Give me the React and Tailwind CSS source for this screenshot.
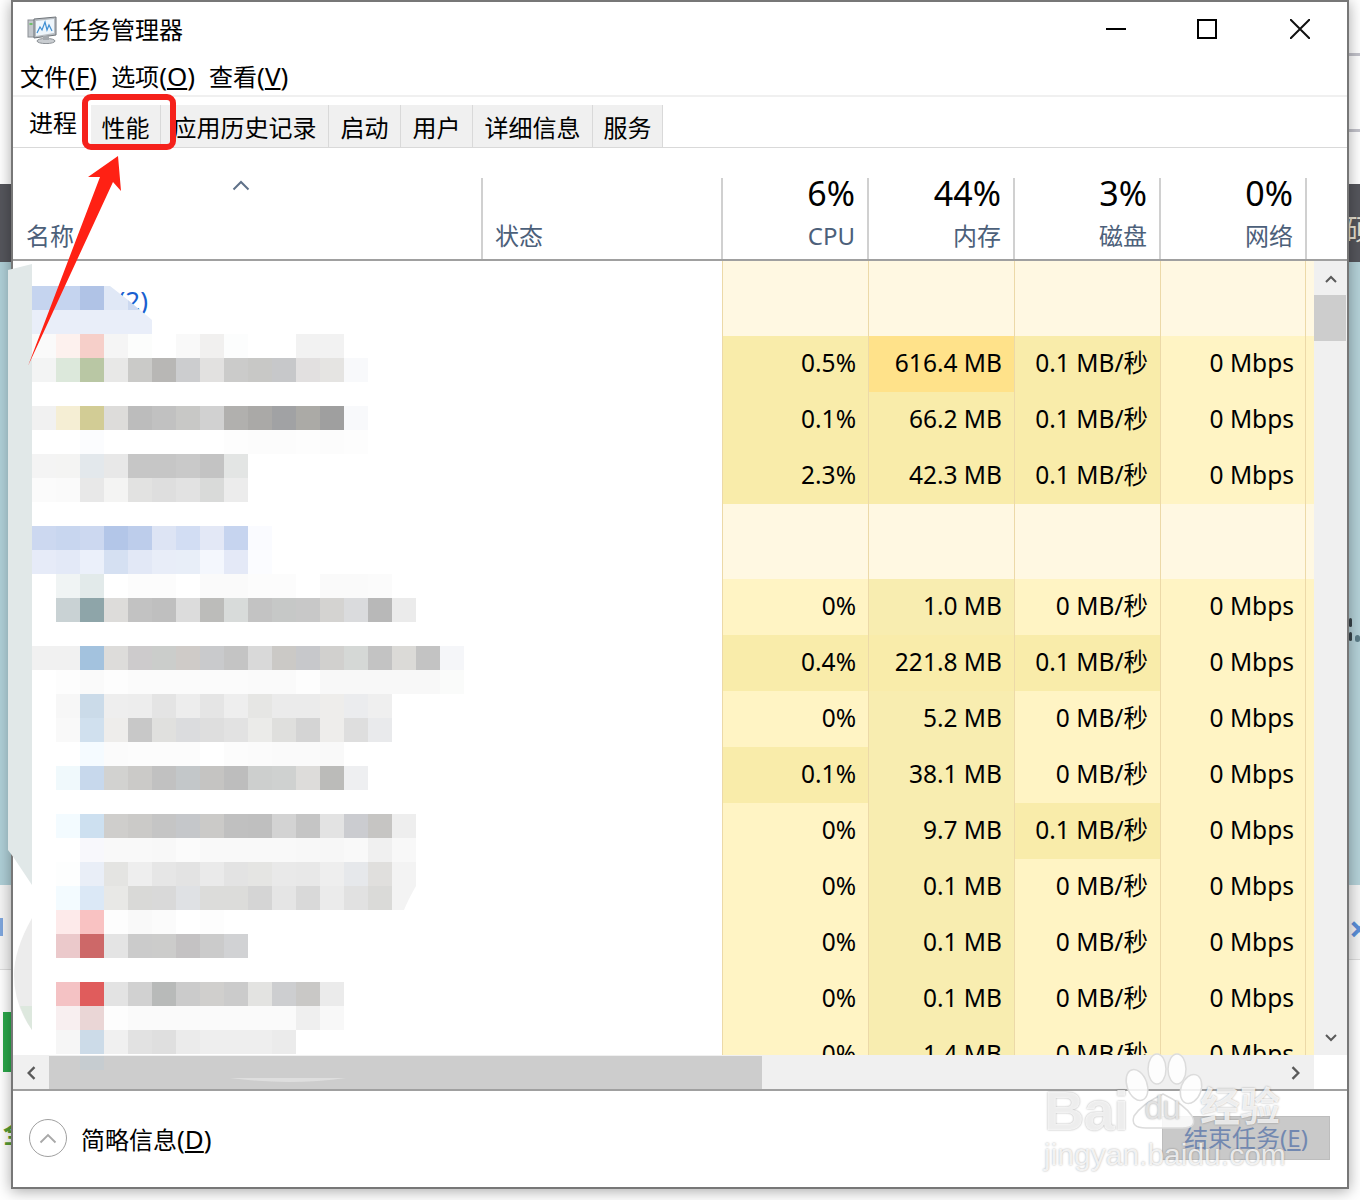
import React from 'react';

const GRID = 'grid grid-cols-[469px_240px_146px_146px_146px_146px_8px]';

const tabs = [
    { label: '性能', width: 'w-[70px]' },
    { label: '应用历史记录', width: 'w-[168px]' },
    { label: '启动', width: 'w-[72px]' },
    { label: '用户', width: 'w-[72px]' },
    { label: '详细信息', width: 'w-[120px]' },
    { label: '服务', width: 'w-[70px]' },
];

const columns = [
    { value: '6%', label: 'CPU' },
    { value: '44%', label: '内存' },
    { value: '3%', label: '磁盘' },
    { value: '0%', label: '网络' },
];

const shade = {
    l: 'bg-[#fff4c4]',
    c: 'bg-[#f8edb0]',
    m: 'bg-[#f9ecaa]',
    s: 'bg-[#ffe28a]',
    g: 'bg-[#fff8e2]',
};

// every cell: [text, shade]
const rows = [
    { group: true, text: '(2)' },
    { cells: [['0.5%', 'm'], ['616.4 MB', 's'], ['0.1 MB/秒', 'm'], ['0 Mbps', 'l']] },
    { cells: [['0.1%', 'm'], ['66.2 MB', 'm'], ['0.1 MB/秒', 'm'], ['0 Mbps', 'l']] },
    { cells: [['2.3%', 'm'], ['42.3 MB', 'm'], ['0.1 MB/秒', 'm'], ['0 Mbps', 'l']] },
    { group: true },
    { cells: [['0%', 'l'], ['1.0 MB', 'c'], ['0 MB/秒', 'l'], ['0 Mbps', 'l']] },
    { cells: [['0.4%', 'm'], ['221.8 MB', 'm'], ['0.1 MB/秒', 'm'], ['0 Mbps', 'l']] },
    { cells: [['0%', 'l'], ['5.2 MB', 'c'], ['0 MB/秒', 'l'], ['0 Mbps', 'l']] },
    { cells: [['0.1%', 'm'], ['38.1 MB', 'c'], ['0 MB/秒', 'l'], ['0 Mbps', 'l']] },
    { cells: [['0%', 'l'], ['9.7 MB', 'c'], ['0.1 MB/秒', 'm'], ['0 Mbps', 'l']] },
    { cells: [['0%', 'l'], ['0.1 MB', 'c'], ['0 MB/秒', 'l'], ['0 Mbps', 'l']] },
    { cells: [['0%', 'l'], ['0.1 MB', 'c'], ['0 MB/秒', 'l'], ['0 Mbps', 'l']] },
    { cells: [['0%', 'l'], ['0.1 MB', 'c'], ['0 MB/秒', 'l'], ['0 Mbps', 'l']] },
    { cells: [['0%', 'l'], ['1.4 MB', 'c'], ['0 MB/秒', 'l'], ['0 Mbps', 'l']] },
];

// pixelated process names: [y, first column, colours]
const mosaic = [
    [286, 0, 'c5d4ef c5d4ef b0c3e6'],
    [334, 0, 'fafafa fdf1ee f6cfc9 f5f5f5 fcfdfc fff f9f9f9 f1f0ef fcfdfd fff fff f2f2f2 f2f2f2'],
    [358, 0, 'f3f4f4 dce8db b9c7a4 e8e8e7 cacac8 b8b7b5 cccdcf e2e1e0 cbcbca c8c8c6 c7c8ca e2e0e0 e5e4e2 f8f9fb'],
    [406, 0, 'f1f1f1 f5eed4 d2cc95 dddcda bcbcbc c1c1c1 c8c8c6 d1d1d1 b1b0ae aaa9a7 a1a2a4 abaaa6 9f9f9f f8f9fb'],
    [430, 0, 'fff fff fbfcfe fff fff fff fff fff fdfdfd fcfcfc fcfcfc fdfdfd fcfcfc fdfdfd'],
    [454, 0, 'f4f4f4 f4f4f3 e3e8ec e8e8e8 c6c6c6 c6c6c6 c9c9c9 c3c3c3 e3e5e4'],
    [478, 0, 'fbfbfb fafafa e8e8e8 f4f4f3 e2e2e1 dedede e2e2e2 d9dad9 ececec'],
    [526, 0, 'ccd8f0 c8d6ef ccd8f0 b3c6e8 bdcdeb dde4f4 d2ddf3 e3e8f6 c6d4ef fafbff'],
    [550, 0, 'e6ebf8 e3e9f7 ebf0fa d5e0f2 e2e8f6 e8edf8 e8eef8 f4f7fd e4e9f7 fbfcff'],
    [574, 1, 'f0f4f4 e2eaea fff fcfcfc fcfcfc fff fafafa fafafa fcfcfc fcfcfc fff fafafa fafafa fbfbfb'],
    [598, 1, 'c9d2d4 8ea5a9 dddcda c2c2c2 bfbfbf dcdcdc bcbcba d8dbda c3c3c3 c6c8c7 c8c8c8 d4d3d1 dadbdd b8b8b8 ebebeb'],
    [646, 0, 'f1f1f1 f1f1f1 a3c2de dddcda cdcbcc cbcdcb cfcbc8 c9cacc c4c4c4 d9d9d9 cbc9c6 c7c8cb d1d0ce d5d8d6 c3c3c3 dbdad7 c3c3c3 f5f6f9'],
    [670, 1, 'fdfdfd fafafa fdfdfd fbfbfb fbfbfb fbfbfb fbfbfb fbfbfb fafafa fafafa fdfdfd f8f8f8 f8f8f8 f8f8f8 f8f8f8 f8f8f8 fafbfa'],
    [694, 1, 'f7f7f7 cbdbe9 eeeeee ededed e4e4e4 ededed e5e5e5 eeeeee e6e6e4 ebebeb ebebeb eeedeb ebecee efefef'],
    [718, 1, 'f9f9f9 d0e0ee eeedeb c8c8c8 e0e0de dbdcde dedede e2e2e2 ebebe9 dfdfdd d4d4d4 eeedeb dedede e9eaec'],
    [742, 2, 'f5fbff fbfbfb fcfcfc fcfcfc fcfcfc fff fcfcfc fbfbfb fafafa fafafa f9f9f9'],
    [766, 1, 'f0f9fc c7d8ec d2d2d0 cbcac8 c1c1c1 c3c7c9 c5c4c2 bdbdbd cdcfce cfd1d0 dddcda bbbbb9 eeeff1'],
    [814, 1, 'f3fbff cde0f0 cfcecc cbcac8 c5c5c5 c5c7ca cbcac8 c0c0c0 bfbfbf d3d3d3 c5c5c5 e3e3e3 cbccd0 c6c5c3 eeeeee'],
    [838, 2, 'f8f8fc f9f9f9 f9f9f9 f8f8f8 fbfbfb f9f9f9 f9f9f9 f9f9f9 f9f9f9 f8f8f8 f7f7f7 f9f9f9 f0f0f0 f8f8f8'],
    [862, 1, 'fdfefe e9eef7 e4e4e2 eeeeee e6e6e6 e3e3e3 eaeaea e3e3e3 e5e5e3 e9e9e9 e8e8e8 eeeeee e6e8eb e0dfdd f3f3f3'],
    [886, 1, 'f3fbff dbe8f6 e8e8e6 d9d9d7 d9d9d9 dfe1e4 dcdcda dcdcda d5d5d5 e5e5e5 d9d9d9 ebebeb e1e1e1 dadad8'],
    [910, 1, 'fdeaea f9c2c2 fdfdfd f9f9f9 fbfbfb fff fdfdfd'],
    [934, 1, 'ebc9cb cd6868 e4e4e4 cbcbcb cccccb c4c2c3 cbcbcb d1d2d4'],
    [982, 1, 'f4c2c4 e05c5c e3e3e3 d1d1d1 b8bab9 cbcbcb d0cfcd cbcbcb e3e3e1 cdced0 c9c8c6 ebebeb'],
    [1006, 1, 'f8eff0 ead6d6 fdfdfd fafafa fafafa fafafa fafafa fafafa fafafa fafafa efefef f8f8f8'],
    [1030, 1, 'f6f6f6 ccdbe8 f0f0f0 e2e2e2 dfdfdf ebebeb eeeeee eeeeee eeeeee ebebeb'],
];

const Chevron = ({ up, className, weight = 2 }) => (
    <svg viewBox="0 0 12 8" className={className}>
        <path d={up ? 'M1 7L6 2l5 5' : 'M1 1l5 5 5-5'} fill="none" stroke="currentColor" strokeWidth={weight} />
    </svg>
);

const SideChevron = ({ right }) => (
    <svg viewBox="0 0 8 12" className="w-[10px] h-[14px] text-[#5a5a5a]">
        <path d={right ? 'M1 1l5 5-5 5' : 'M7 1L2 6l5 5'} fill="none" stroke="currentColor" strokeWidth="2" />
    </svg>
);

const TaskIcon = () => (
    <svg viewBox="0 0 30 28" className="w-[30px] h-[28px] mr-[6px]">
        <rect x="1" y="4" width="9" height="17" fill="#c3c7cb" stroke="#8b9095" />
        <rect x="2.5" y="7" width="3" height="2" fill="#6fbf6a" />
        <path d="M7 3l22-2v18L7 22z" fill="#b9bec3" stroke="#6f757a" />
        <path d="M9 5l18-2v14L9 20z" fill="#eef6fc" />
        <path d="M10 17l3-6 2 3 3-8 2 8 2-5 3 6" fill="none" stroke="#3f8fd2" strokeWidth="1.2" />
        <ellipse cx="19" cy="25" rx="9" ry="2.6" fill="#c9cdd1" stroke="#8b9095" />
        <rect x="16" y="20" width="6" height="4" fill="#a4a9ae" />
    </svg>
);

const Backdrop = () => (
    <>
        <div className="absolute left-0 top-[184px] w-[12px] h-[78px] bg-[#55565c]" />
        <div className="absolute left-0 top-[262px] w-[12px] h-[623px] bg-[#afcfd7]" />
        <div className="absolute left-0 top-[885px] w-[12px] h-[85px] bg-[#f5f5f5] border-b border-[#dddddd]" />
        <div className="absolute left-0 top-[918px] w-[3px] h-[18px] bg-[#7ea6dd]" />
        <div className="absolute left-[3px] top-[1012px] w-[9px] h-[60px] bg-[#2ba84a]" />
        <div className="absolute left-[3px] top-[1116px] text-[26px] leading-[34px] font-bold text-[#5a9e32]">全</div>
        <div className="absolute left-[1349px] top-[53px] w-[11px] h-[3px] bg-[#c3c3cb]" />
        <div className="absolute left-[1349px] top-[129px] w-[11px] h-[3px] bg-[#c3c3cb]" />
        <div className="absolute left-[1349px] top-[184px] w-[11px] h-[78px] bg-[#55565c]" />
        <div className="absolute left-[1345px] top-[212px] text-[28px] leading-[34px] text-[#e6e0d0]">硕</div>
        <div className="absolute left-[1349px] top-[262px] w-[11px] h-[623px] bg-[#b5d2d9]" />
        <div className="absolute left-[1349px] top-[618px] w-[3px] h-[9px] rounded-full bg-[#39444a]" />
        <div className="absolute left-[1349px] top-[632px] w-[3px] h-[9px] rounded-full bg-[#39444a]" />
        <div className="absolute left-[1355px] top-[635px] w-[5px] h-[7px] rounded-full bg-[#5c7d88]" />
        <div className="absolute left-[1349px] top-[885px] w-[11px] h-[75px] bg-[#f4f4f4] border-b border-[#dddddd]" />
        <div className="absolute left-[1349px] top-[909px] text-[36px] leading-[40px] font-bold text-[#5b8fd8]">×</div>
    </>
);

const Overlay = () => (
    <svg viewBox="0 0 1360 1200" className="absolute left-0 top-0 w-[1360px] h-[1200px] pointer-events-none">
        <path d="M8 270L32 264V885L14 858L8 850Z" fill="#e1e8e8" />
        <path d="M32 918Q14 950 14 975Q14 1005 32 1030Z" fill="#ececec" />
        <path d="M20 1006H32V1030Q25 1020 20 1006Z" fill="#dde8de" />
        {mosaic.flatMap(([y, start, colours]) =>
            colours.split(' ').map((colour, i) => (
                <rect key={`${y}-${i}`} x={32 + (start + i) * 24} y={y} width="24" height="24" fill={`#${colour}`} />
            ))
        )}
        <path d="M104 286H110L128 300V310H104Z" fill="#e0e8f6" />
        <path d="M128 300L140 310H128Z" fill="#ccd9f0" />
        <path d="M32 310H140L152 320V334H32Z" fill="#e9eef9" />
        <path d="M392 886H416Q408 900 404 910H392Z" fill="#f3f3f3" />
        <rect x="80" y="1056" width="24" height="14" fill="#c3ccd2" opacity="0.7" />
        <path d="M230 1078Q290 1086 346 1078Z" fill="#dedede" />
        <path d="M118 156L121 191L113 182L28 366L100 177L88 177Z" fill="#ff2114" />
        <rect x="85" y="97" width="88" height="50" rx="6" fill="none" stroke="#f5211b" strokeWidth="6" />
        <g fill="#ffffff" fillOpacity="0.85" stroke="#dcdcdc" strokeWidth="1.5">
            <ellipse cx="1137" cy="1085" rx="10" ry="16" transform="rotate(-20 1137 1085)" />
            <ellipse cx="1157" cy="1069" rx="9" ry="15" />
            <ellipse cx="1177" cy="1069" rx="9" ry="15" />
            <ellipse cx="1191" cy="1089" rx="10" ry="15" transform="rotate(20 1191 1089)" />
            <path d="M1163 1094Q1142 1104 1134 1116Q1130 1128 1146 1128H1182Q1198 1128 1192 1116Q1184 1104 1163 1094Z" />
        </g>
    </svg>
);

const Watermark = () => (
    <div className="absolute left-[1044px] top-[1082px] w-[250px] pointer-events-none text-white/80 [text-shadow:0_0_2px_rgba(0,0,0,0.35)] font-['Liberation_Sans','Noto_Sans_CJK_SC',sans-serif]">
        <div className="flex items-center h-[58px] text-[56px] leading-[58px] font-bold">
            <span className="tracking-[-1px]">Bai</span>
            <span className="ml-[16px] -mt-[8px] text-[34px] font-normal tracking-[-1px] text-[#e2e2e2]">du</span>
            <span className="ml-[20px] -mt-[8px] text-[40px]">经验</span>
        </div>
        <div className="text-[30px] leading-[30px] whitespace-nowrap">jingyan.baidu.com</div>
    </div>
);

export default function App() {
    return (
        <div className="relative w-[1360px] h-[1200px] overflow-hidden bg-white text-black font-['Noto_Sans','Noto_Sans_CJK_SC',sans-serif]">
            <Backdrop />

            <div className="absolute left-[11px] top-0 w-[1338px] h-[1189px] flex flex-col bg-white border-2 border-[#777777] shadow-[0_2px_14px_rgba(0,0,0,0.35)]">
                {/* title bar */}
                <div className="flex items-center h-[56px] shrink-0 pl-[14px] pr-[1px]">
                    <TaskIcon />
                    <span className="text-[24px] leading-[34px]">任务管理器</span>
                    <div className="ml-auto flex -mt-[2px]">
                        <button className="w-[88px] h-[56px] flex items-center justify-center">
                            <span className="block w-[20px] h-[2px] bg-black" />
                        </button>
                        <button className="w-[94px] h-[56px] flex items-center justify-center">
                            <span className="block w-[20px] h-[20px] border-2 border-black" />
                        </button>
                        <button className="w-[92px] h-[56px] flex items-center justify-center">
                            <svg viewBox="0 0 20 20" className="w-[20px] h-[20px]">
                                <path d="M0 0L20 20M20 0L0 20" stroke="#111" strokeWidth="2" />
                            </svg>
                        </button>
                    </div>
                </div>

                {/* menu */}
                <div className="flex items-center gap-[14px] h-[39px] shrink-0 pl-[7px] border-b-2 border-[#f0f0f0] text-[24px] leading-[34px]">
                    <span>文件<span className="text-[26px]">(<span className="underline">F</span>)</span></span>
                    <span>选项<span className="text-[26px]">(<span className="underline">O</span>)</span></span>
                    <span>查看<span className="text-[26px]">(<span className="underline">V</span>)</span></span>
                </div>

                {/* tabs */}
                <div className="flex items-end h-[51px] shrink-0 border-b border-[#d9d9d9] text-[24px] leading-[34px]">
                    <div className="w-[78px] h-full flex items-center pl-[16px] pt-[2px]">进程</div>
                    {tabs.map((tab) => (
                        <div
                            key={tab.label}
                            className={`${tab.width} h-[42px] flex items-center justify-center pt-[4px] bg-[#f0f0f0] border-r border-[#d9d9d9]`}
                        >
                            {tab.label}
                        </div>
                    ))}
                </div>

                {/* column header */}
                <div className={`${GRID} h-[113px] shrink-0 border-b-2 border-[#a0a0a0]`}>
                    <div className="flex flex-col mt-[30px] pl-[13px]">
                        <Chevron up weight={1.3} className="w-[18px] h-[12px] ml-[206px] mt-[1px] text-[#5f7189]" />
                        <span className="mt-auto pb-[6px] text-[24px] leading-[34px] text-[#4c607a]">名称</span>
                    </div>
                    <div className="flex flex-col justify-end mt-[30px] -ml-[1px] pl-[12px] pb-[6px] border-l-2 border-[#d0d0d0] text-[24px] leading-[34px] text-[#4c607a]">
                        状态
                    </div>
                    {columns.map((col) => (
                        <div key={col.label} className="flex flex-col items-end mt-[30px] -ml-[1px] pr-[13px] border-l-2 border-[#d0d0d0]">
                            <span className="text-[34px] leading-[30px]">{col.value}</span>
                            <span className="mt-auto pb-[6px] text-[24px] leading-[34px] text-[#4c607a]">{col.label}</span>
                        </div>
                    ))}
                    <div className="mt-[30px] -ml-[1px] border-l-2 border-[#d0d0d0]" />
                </div>

                {/* process list + vertical scrollbar */}
                <div className="flex h-[794px] shrink-0">
                    <div className="w-[1301px] overflow-hidden">
                        {rows.map((row, index) =>
                            row.group ? (
                                <div key={index} className={`${GRID} h-[75px]`}>
                                    <div className="col-span-2">
                                        {row.text && (
                                            <div className="w-[135px] pt-[22px] text-right text-[26px] leading-[34px] text-[#1a5fd0]">{row.text}</div>
                                        )}
                                    </div>
                                    {[0, 1, 2, 3].map((n) => (
                                        <div key={n} className={`${shade.g} border-l border-[#ecd9a8]`} />
                                    ))}
                                    <div className={`${shade.g} -ml-[1px] border-l border-[#ecd9a8]`} />
                                </div>
                            ) : (
                                <div key={index} className={`${GRID} h-[56px]`}>
                                    <div className="col-span-2" />
                                    {row.cells.map(([text, tone], n) => (
                                        <div
                                            key={n}
                                            className={`${shade[tone]} border-l border-[#ecd9a8] pr-[12px] text-right text-[24.5px] leading-[54px] whitespace-nowrap`}
                                        >
                                            {text}
                                        </div>
                                    ))}
                                    <div className={`${shade.l} -ml-[1px] border-l border-[#ecd9a8]`} />
                                </div>
                            )
                        )}
                    </div>
                    <div className="flex-1 flex flex-col items-center bg-[#f0f0f0]">
                        <Chevron up className="w-[12px] h-[8px] mt-[14px] text-[#5a5a5a]" />
                        <div className="w-full h-[46px] mt-[12px] pr-[1px]">
                            <div className="w-full h-full bg-[#cdcdcd]" />
                        </div>
                        <Chevron className="w-[12px] h-[8px] mt-auto mb-[13px] text-[#5a5a5a]" />
                    </div>
                </div>

                {/* horizontal scrollbar */}
                <div className="flex h-[34px] shrink-0">
                    <div className="w-[1301px] flex bg-[#f0f0f0] pt-[1px]">
                        <div className="w-[36px] flex items-center justify-center">
                            <SideChevron />
                        </div>
                        <div className="w-[713px] bg-[#cdcdcd]" />
                        <div className="flex-1 flex items-center justify-end pr-[13px]">
                            <SideChevron right />
                        </div>
                    </div>
                </div>

                {/* footer */}
                <div className="flex-1 flex items-center justify-between pl-[16px] pr-[17px] pb-[2px] border-t-2 border-[#a0a0a0]">
                    <div className="flex items-center gap-[14px]">
                        <div className="w-[38px] h-[38px] rounded-full border border-[#a0a0a0] flex items-center justify-center">
                            <Chevron up weight={1.2} className="w-[18px] h-[12px] text-[#a8a8a8]" />
                        </div>
                        <span className="pt-[2px] text-[24px] leading-[34px]">
                            简略信息<span className="text-[26px]">(<span className="underline">D</span>)</span>
                        </span>
                    </div>
                    <button className="w-[168px] h-[44px] bg-[#c9c9c9] border border-[#bdbdbd] text-[24px] leading-[34px] text-[#7288b0]">
                        结束任务(<span className="underline">E</span>)
                    </button>
                </div>
            </div>

            <Overlay />
            <Watermark />
        </div>
    );
}
